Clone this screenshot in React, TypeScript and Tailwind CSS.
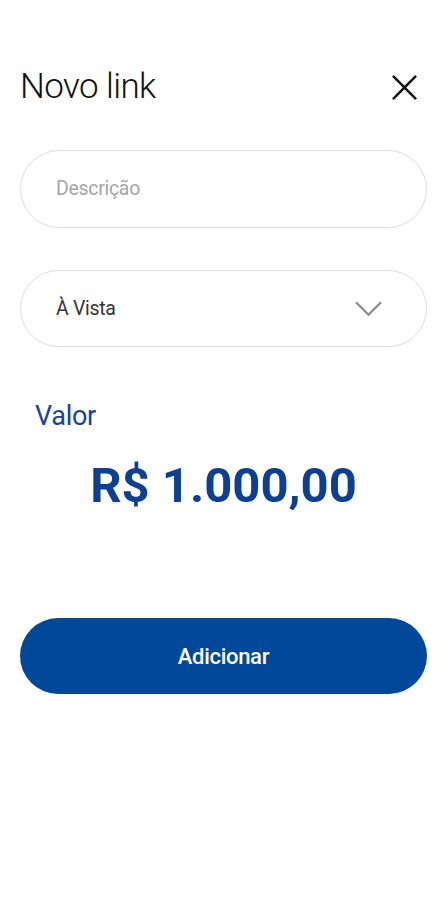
export default function App() {
  return (
    <div className="min-h-[900px] w-full bg-white pl-5 pr-[19px] font-['Roboto',sans-serif]">
      <div className="flex items-center justify-between pt-[65px]">
        <h1 className="text-[35px] font-light leading-[44px] tracking-[-0.6px] text-[#111]">Novo link</h1>
        <button className="mr-[9px] flex h-[28px] w-[28px] items-center justify-center">
          <svg width="27" height="27" viewBox="0 0 28 28" fill="none" stroke="#111" strokeWidth="2.6">
            <path d="M2 2 L26 26 M26 2 L2 26" />
          </svg>
        </button>
      </div>

      <div className="mt-[41px] flex h-[78px] items-center rounded-full border border-[#dcdcdc] px-[35px]">
        <span className="text-[19.5px] tracking-[-0.3px] text-[#a5a5a5]">Descrição</span>
      </div>

      <div className="mt-[42px] flex h-[77px] items-center justify-between rounded-full border border-[#dcdcdc] pl-[35px] pr-[44px]">
        <span className="text-[19.5px] tracking-[-0.3px] text-[#333]">À Vista</span>
        <svg width="27" height="16" viewBox="0 0 28 16" fill="none" stroke="#8a8a8a" strokeWidth="2.2">
          <path d="M1 1 L14 14 L27 1" />
        </svg>
      </div>

      <div className="mt-[51px] pl-[15px] text-[27px] leading-[36px] tracking-[-0.3px] text-[#1d428f]">Valor</div>

      <div className="mt-[24px] text-center text-[49px] font-bold leading-[56px] text-[#0d3f93]">R$ 1.000,00</div>

      <button className="mt-[104px] flex h-[76px] w-full items-center justify-center rounded-full bg-[#01479a] text-[22px] font-medium tracking-[-0.3px] text-white">
        Adicionar
      </button>
    </div>
  );
}
